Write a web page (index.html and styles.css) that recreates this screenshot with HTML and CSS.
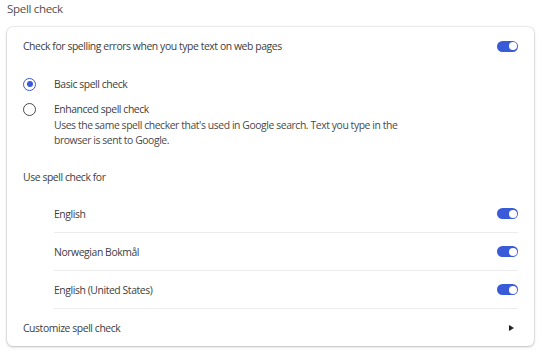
FILE: index.html
```html
<!DOCTYPE html>
<html lang="en">
<head>
<meta charset="utf-8">
<title>Spell check</title>
<link rel="stylesheet" href="styles.css">
</head>
<body>
<h2 class="page-title">Spell check</h2>
<section class="card">
  <div class="row row-top">
    <span class="label">Check for spelling errors when you type text on web pages</span>
    <span class="toggle on"><span class="knob"></span></span>
  </div>

  <div class="radio-group">
    <div class="radio-row">
      <span class="radio checked"></span>
      <span class="label">Basic spell check</span>
    </div>
    <div class="radio-row">
      <span class="radio"></span>
      <div class="radio-text">
        <div class="label">Enhanced spell check</div>
        <div class="desc">Uses the same spell checker that's used in Google search. Text you type in the browser is sent to Google.</div>
      </div>
    </div>
  </div>

  <div class="subhead">Use spell check for</div>

  <div class="lang-list">
    <div class="lang-row">
      <span class="label">English</span>
      <span class="toggle on"><span class="knob"></span></span>
    </div>
    <div class="lang-row">
      <span class="label">Norwegian Bokmål</span>
      <span class="toggle on"><span class="knob"></span></span>
    </div>
    <div class="lang-row">
      <span class="label">English (United States)</span>
      <span class="toggle on"><span class="knob"></span></span>
    </div>
  </div>

  <div class="row row-link">
    <span class="label">Customize spell check</span>
    <span class="arrow"></span>
  </div>
</section>
</body>
</html>
```

FILE: styles.css
```css
* { box-sizing: border-box; }

html, body {
  margin: 0;
  padding: 0;
  background: #ffffff;
}

body {
  font-family: "Open Sans", "Noto Sans", sans-serif;
  font-size: 10.4px;
  letter-spacing: -0.42px;
  color: #404040;
  width: 550px;
  height: 363px;
  overflow: hidden;
}

.page-title {
  margin: 0;
  padding: 0 0 0 7px;
  height: 27px;
  line-height: 17px;
  font-size: 11.6px;
  letter-spacing: -0.35px;
  font-weight: 400;
  color: #505050;
}

.card {
  margin: 0 16px 0 7px;
  height: 319px;
  background: #fff;
  border-radius: 6px;
  box-shadow: 0 0 0 1px rgba(0,0,0,0.06), 0 1px 3px rgba(0,0,0,0.22);
  overflow: hidden;
}

.label { line-height: 16px; }

.row {
  display: flex;
  align-items: center;
  justify-content: space-between;
  padding: 0 16px;
  height: 38px;
}

.toggle {
  position: relative;
  display: inline-block;
  width: 21px;
  height: 11px;
  border-radius: 6px;
  background: #3a5bd7;
  flex: none;
}
.toggle .knob {
  position: absolute;
  top: 1.5px;
  right: 1.5px;
  width: 8px;
  height: 8px;
  border-radius: 50%;
  background: #fff;
}

.radio-group {
  padding: 11px 16px 0 16px;
  display: flex;
  flex-direction: column;
  gap: 9px;
}
.radio-row {
  display: flex;
  align-items: flex-start;
}
.radio {
  flex: none;
  width: 13px;
  height: 13px;
  margin-top: 1.5px;
  margin-right: 18px;
  border-radius: 50%;
  border: 1.5px solid #4a4a4a;
  position: relative;
}
.radio.checked {
  border-color: #3a5bd7;
}
.radio.checked::after {
  content: "";
  position: absolute;
  left: 50%;
  top: 50%;
  width: 6px;
  height: 6px;
  margin: -3px 0 0 -3px;
  border-radius: 50%;
  background: #3a5bd7;
}
.desc {
  margin-top: 1px;
  line-height: 15px;
  max-width: 360px;
  color: #4a4a4a;
}

.subhead {
  padding: 0 16px;
  margin-top: 21px;
  line-height: 16px;
}

.lang-list {
  margin-top: 10px;
  padding: 0 16px 0 47px;
}
.lang-row {
  display: flex;
  align-items: center;
  justify-content: space-between;
  height: 38px;
  border-bottom: 1px solid #ececec;
}

.row-link {
  height: 37px;
  padding-right: 20px;
}
.arrow {
  width: 0;
  height: 0;
  border-top: 3.5px solid transparent;
  border-bottom: 3.5px solid transparent;
  border-left: 5px solid #202124;
}
```
